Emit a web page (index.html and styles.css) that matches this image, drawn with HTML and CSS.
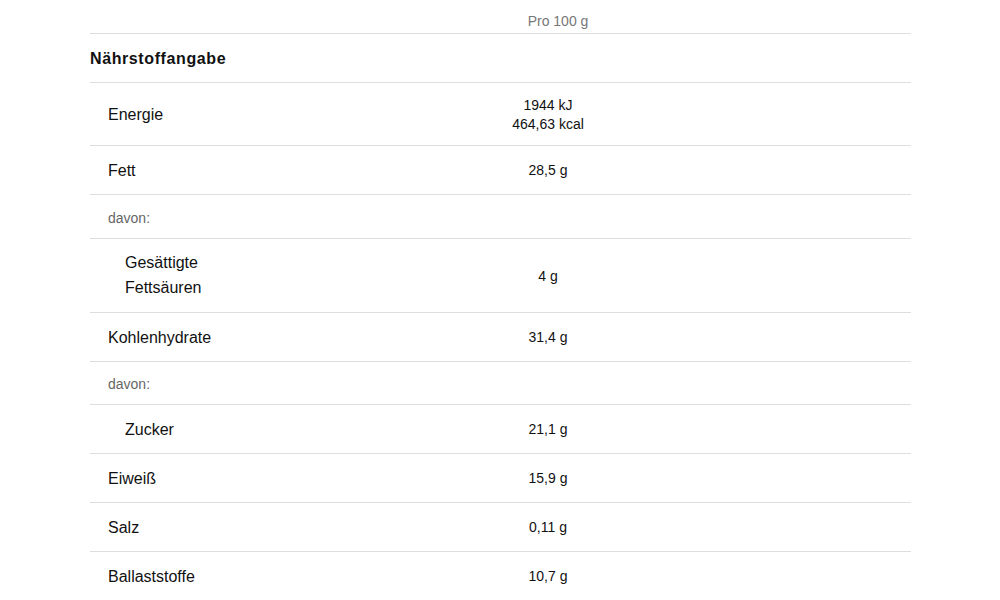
FILE: index.html
```
<!DOCTYPE html>
<html lang="de">
<head>
<meta charset="utf-8">
<title>Nährwerte</title>
<link rel="stylesheet" href="styles.css">
</head>
<body>
<div class="table">
  <div class="row head">
    <div class="label"></div>
    <div class="value per">Pro 100 g</div>
  </div>
  <div class="row section">
    <div class="label">Nährstoffangabe</div>
    <div class="value"></div>
  </div>
  <div class="row tall">
    <div class="label">Energie</div>
    <div class="value">1944 kJ<br>464,63 kcal</div>
  </div>
  <div class="row">
    <div class="label">Fett</div>
    <div class="value">28,5 g</div>
  </div>
  <div class="row sub">
    <div class="label note">davon:</div>
    <div class="value"></div>
  </div>
  <div class="row wrap">
    <div class="label indent">Gesättigte<br>Fettsäuren</div>
    <div class="value">4 g</div>
  </div>
  <div class="row">
    <div class="label">Kohlenhydrate</div>
    <div class="value">31,4 g</div>
  </div>
  <div class="row sub sub2">
    <div class="label note">davon:</div>
    <div class="value"></div>
  </div>
  <div class="row">
    <div class="label indent">Zucker</div>
    <div class="value">21,1 g</div>
  </div>
  <div class="row">
    <div class="label">Eiweiß</div>
    <div class="value">15,9 g</div>
  </div>
  <div class="row">
    <div class="label">Salz</div>
    <div class="value">0,11 g</div>
  </div>
  <div class="row">
    <div class="label">Ballaststoffe</div>
    <div class="value">10,7 g</div>
  </div>
</div>
</body>
</html>
```

FILE: styles.css
```
html, body {
  margin: 0;
  padding: 0;
  background: #fff;
}
body {
  font-family: "Liberation Sans", Arial, sans-serif;
  color: #111;
}
.table {
  margin-left: 90px;
  width: 821px;
}
.row {
  display: grid;
  grid-template-columns: 400px 116px 1fr;
  align-items: center;
  min-height: 48px;
  border-bottom: 1px solid #dedede;
}
.label {
  padding-left: 18px;
  padding-top: 2px;
  font-size: 16px;
  line-height: 20px;
}
.value {
  text-align: center;
  font-size: 14px;
  line-height: 19px;
  padding-top: 1px;
  color: #111;
}
.head {
  min-height: 33px;
  align-items: end;
}
.head .value {
  padding-left: 20px;
  padding-bottom: 4px;
  color: #777;
  line-height: 16px;
}
.section .label {
  padding-left: 0;
  font-weight: bold;
  font-size: 16px;
  letter-spacing: 0.6px;
}
.tall {
  min-height: 62px;
}
.sub {
  min-height: 43px;
}
.sub2 {
  min-height: 42px;
}
.note {
  font-size: 14px;
  color: #666;
}
.wrap {
  min-height: 73px;
}
.wrap .label {
  line-height: 25px;
  padding-top: 0;
  padding-bottom: 2px;
}
.indent {
  padding-left: 35px;
}
```
